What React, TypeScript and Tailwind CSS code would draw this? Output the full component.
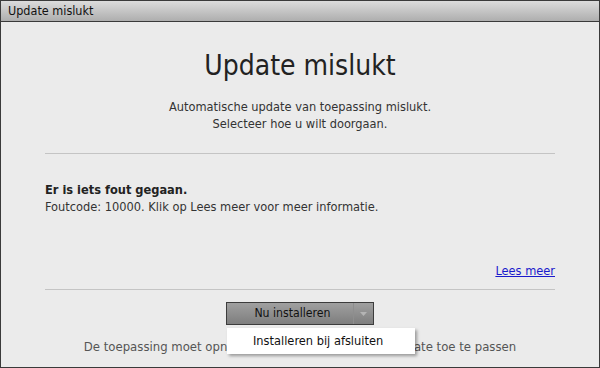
import React from "react";

export default function App() {
  const font = { fontFamily: '"DejaVu Sans Condensed", "Noto Sans", sans-serif' };
  return (
    <div className="w-[600px] h-[368px] bg-[#ebebeb] border border-[#3a3a3a] flex flex-col overflow-hidden" style={font}>
      <div className="h-[21px] shrink-0 bg-gradient-to-b from-[#dcdcdc] to-[#aeaeae] border-b border-[#3a3a3a] flex items-center pl-[7px] text-[12.5px] text-[#111]">
        Update mislukt
      </div>
      <div className="flex-1 flex flex-col px-[44px] relative">
        <div className="text-center text-[28px] leading-none text-[#222] mt-[30px]">Update mislukt</div>
        <div className="text-center text-[12.7px] leading-[17px] text-[#333] mt-[18px]">
          Automatische update van toepassing mislukt.
          <br />
          Selecteer hoe u wilt doorgaan.
        </div>
        <div className="h-px bg-[#c4c4c4] mt-[21px]" />
        <div className="text-[12.7px] leading-[17px] text-[#222] mt-[27px]">
          <div className="font-bold">Er is iets fout gegaan.</div>
          <div className="text-[#333]">Foutcode: 10000. Klik op Lees meer voor meer informatie.</div>
        </div>
        <div className="flex-1" />
        <div className="flex justify-end text-[12.7px] leading-[17px]">
          <a className="text-[#1a1acc] underline">Lees meer</a>
        </div>
        <div className="h-px bg-[#c4c4c4] mt-[10px]" />
        <div className="flex justify-center mt-[12px]">
          <div className="relative">
            <div className="flex w-[148px] h-[23px] border border-[#3c3c3c] bg-gradient-to-b from-[#a0a0a0] to-[#7e7e7e] text-[12.2px] text-[#111]">
              <div className="flex-1 flex items-center justify-center pl-[5px]">Nu installeren</div>
              <div className="w-[20px] border-l border-[#8e8e8e] flex items-center justify-center">
                <svg width="7" height="4" viewBox="0 0 7 4"><path d="M0 0h7L3.5 4z" fill="#b4b4b4" /></svg>
              </div>
            </div>
            <div className="absolute left-[1px] top-[26px] w-[188px] h-[26px] bg-white shadow-[2px_2px_3px_rgba(0,0,0,0.35)] flex items-center pl-[26px] text-[12.7px] text-[#111] z-10 whitespace-nowrap">
              Installeren bij afsluiten
            </div>
          </div>
        </div>
        <div className="text-center text-[13px] leading-[17px] text-[#555] mt-[13px] mb-[12px]">
          De toepassing moet opnieuw worden gestart om de update toe te passen
        </div>
      </div>
    </div>
  );
}
